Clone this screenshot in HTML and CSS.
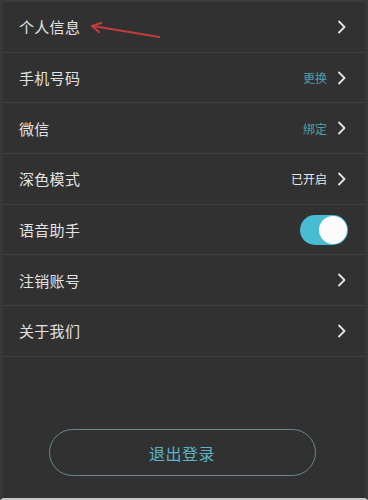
FILE: index.html
```html
<!DOCTYPE html>
<html lang="zh">
<head>
<meta charset="utf-8">
<link rel="stylesheet" href="styles.css">
</head>
<body>
<div class="screen">
  <ul class="list">
    <li class="row">
      <span class="label">个人信息</span>
      <svg class="chev" viewBox="0 0 10 14"><path d="M2 1.5 L7.5 7 L2 12.5" /></svg>
      <svg class="arrow" viewBox="0 0 80 20" width="80" height="20"><path d="M70 15 L4 4" /><path d="M12 1 L3 4 L10 10" /></svg>
    </li>
    <li class="row">
      <span class="label">手机号码</span>
      <span class="value teal">更换</span>
      <svg class="chev" viewBox="0 0 10 14"><path d="M2 1.5 L7.5 7 L2 12.5" /></svg>
    </li>
    <li class="row">
      <span class="label">微信</span>
      <span class="value teal">绑定</span>
      <svg class="chev" viewBox="0 0 10 14"><path d="M2 1.5 L7.5 7 L2 12.5" /></svg>
    </li>
    <li class="row">
      <span class="label">深色模式</span>
      <span class="value">已开启</span>
      <svg class="chev" viewBox="0 0 10 14"><path d="M2 1.5 L7.5 7 L2 12.5" /></svg>
    </li>
    <li class="row">
      <span class="label">语音助手</span>
      <span class="toggle"><span class="knob"></span></span>
    </li>
    <li class="row">
      <span class="label">注销账号</span>
      <svg class="chev" viewBox="0 0 10 14"><path d="M2 1.5 L7.5 7 L2 12.5" /></svg>
    </li>
    <li class="row">
      <span class="label">关于我们</span>
      <svg class="chev" viewBox="0 0 10 14"><path d="M2 1.5 L7.5 7 L2 12.5" /></svg>
    </li>
  </ul>
  <div class="footer">
    <button class="logout">退出登录</button>
  </div>
</div>
</body>
</html>
```

FILE: styles.css
```css
* { box-sizing: border-box; }
html, body { margin: 0; padding: 0; }
body {
  width: 368px;
  height: 500px;
  background: #313131;
  font-family: "Noto Sans CJK SC", "Noto Sans", sans-serif;
  overflow: hidden;
}
.screen {
  width: 368px;
  height: 500px;
  border-top: 2px solid #3b3b3b;
  border-left: 3px solid #383838;
  border-right: 3px solid #383838;
  border-bottom: 2px solid #c8c8c8;
  display: flex;
  flex-direction: column;
}
.list {
  list-style: none;
  margin: 0;
  padding: 0;
}
.row {
  position: relative;
  height: 50.7px;
  display: flex;
  align-items: center;
  padding: 0 18px 0 16px;
  border-bottom: 1px solid #3e3e3e;
}
.label {
  flex: 1;
  font-size: 15px;
  color: #e2e2e2;
  letter-spacing: 0.3px;
}
.value {
  font-size: 12px;
  color: #e6e6e6;
  margin-right: 10px;
}
.value.teal { color: #4d9fae; }
.chev {
  width: 10px;
  height: 14px;
  fill: none;
  stroke: #e4e4e4;
  stroke-width: 1.8;
  stroke-linecap: round;
  stroke-linejoin: round;
}
.arrow {
  position: absolute;
  left: 86px;
  top: 20px;
  fill: none;
  stroke: #c63a3e;
  stroke-width: 2.2;
  stroke-linecap: round;
  stroke-linejoin: round;
}
.toggle {
  width: 48px;
  height: 30px;
  border-radius: 15px;
  background: #48bcd1;
  display: flex;
  align-items: center;
  justify-content: flex-end;
  padding: 1px;
  margin-right: -1px;
}
.knob {
  width: 28px;
  height: 28px;
  border-radius: 50%;
  background: #fbfbfb;
}
.footer {
  flex: 1;
  display: flex;
  align-items: flex-end;
  justify-content: center;
  padding-bottom: 22px;
  padding-right: 4px;
}
.logout {
  width: 267px;
  height: 47px;
  border: 1.5px solid #6a8a90;
  border-radius: 24px;
  background: transparent;
  color: #5bb3c4;
  font-family: "Noto Sans CJK SC", sans-serif;
  font-size: 16px;
  letter-spacing: 0.5px;
}
```
